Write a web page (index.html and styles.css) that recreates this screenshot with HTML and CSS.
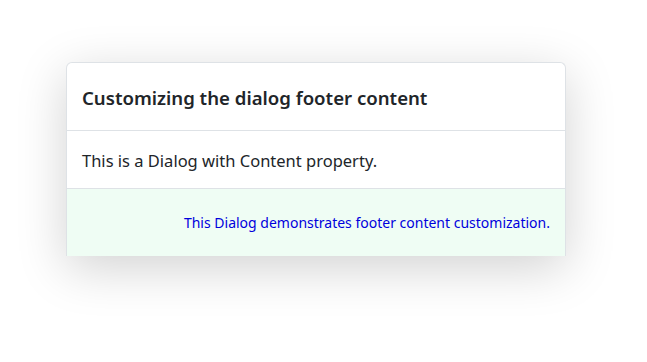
FILE: index.html
```html
<!DOCTYPE html>
<html lang="en">
<head>
  <meta charset="UTF-8" />
  <title>Dialog footer</title>
  <link rel="stylesheet" href="styles.css">
</head>
<body>
  <div class="dialog">
    <div class="dialog-header">Customizing the dialog footer content</div>
    <div class="dialog-content">This is a Dialog with Content property.</div>
    <div class="dialog-footer">
      <span class="footer-text">This Dialog demonstrates footer content customization.</span>
    </div>
  </div>
</body>
</html>
```
FILE: styles.css
```css
html, body { height: 100%; }
body { margin: 0; padding-top: 62px; box-sizing: border-box; background: #fff; font-family: "Noto Sans", "Open Sans", sans-serif; color: #212529; }
.dialog { width: 498px; margin-left: 66px; background: #fff; border: 1px solid #dee2e6; border-bottom: none; border-radius: 6px 6px 0 0; box-shadow: 0 12px 50px rgba(0,0,0,0.18); }
.dialog-header { height: 68px; padding: 2px 15px 0; display: flex; align-items: center; font-size: 18.6px; font-weight: 600; border-bottom: 1px solid #dee2e6; box-sizing: border-box; }
.dialog-content { height: 58px; padding: 2px 15px 0; display: flex; align-items: center; font-size: 16.5px; border-bottom: 1px solid #dee2e6; box-sizing: border-box; }
.dialog-footer { height: 67px; padding: 0 15px; box-sizing: border-box; display: flex; align-items: center; justify-content: flex-end; background: #effdf4; }
.footer-text { font-size: 14px; color: #0000dd; }
```
